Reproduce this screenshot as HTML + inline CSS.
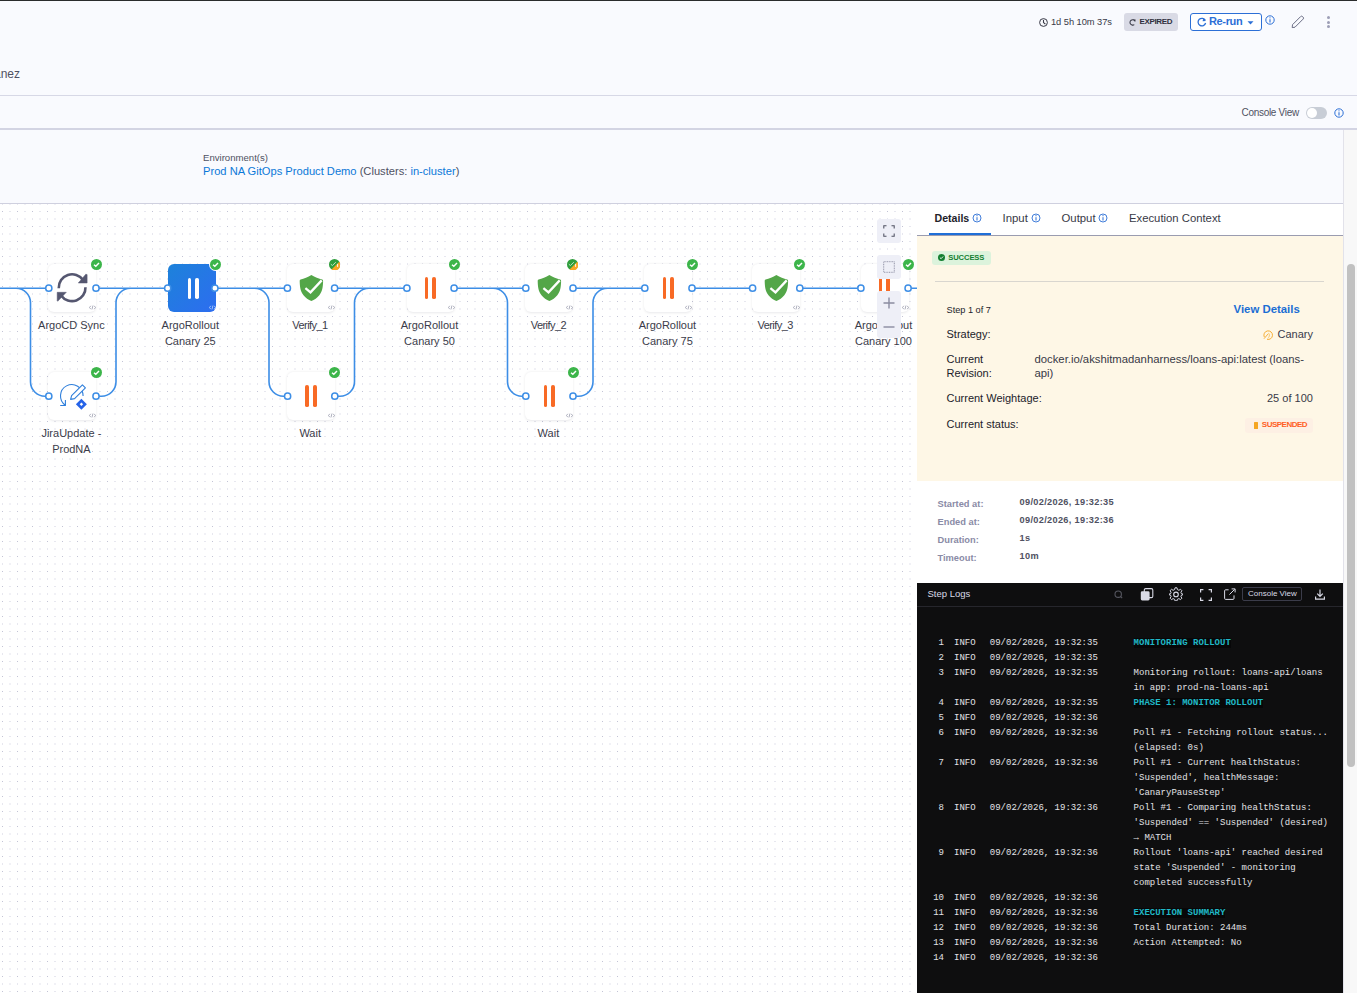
<!DOCTYPE html>
<html><head><meta charset="utf-8">
<style>
*{box-sizing:border-box;margin:0;padding:0}
html,body{width:1357px;height:993px;overflow:hidden}
body{position:relative;background:#f9fafe;font-family:"Liberation Sans",sans-serif;color:#22222a}
.a{position:absolute;white-space:nowrap}
#topline{left:0;top:0;width:1357px;height:1px;background:#2a2c2c}
#l95{left:0;top:95px;width:1357px;height:1px;background:#d7d8e6}
#l128{left:0;top:128px;width:1357px;height:2px;background:#d3d4e3}
#l203{left:0;top:203px;width:1343px;height:1px;background:#cfd0df}
#rborder{left:1343px;top:130px;width:1px;height:863px;background:#e2e2ea}
#track{left:1344px;top:130px;width:13px;height:863px;background:#f8f8f8}
#thumb{left:1347px;top:264px;width:8px;height:503px;background:#c1c1c1;border-radius:4px}
.lbl{width:120px;text-align:center;font-size:11px;line-height:14px;color:#3b3c4a}
.log{font-family:"Liberation Mono",monospace;font-size:9px;line-height:15px;color:#e2e2e6}
.hl{color:#20b8c6;background:#070708;font-weight:700}
#canvas{left:0;top:204px;width:917px;height:789px;background:#fff}
</style></head>
<body>
<div class="a" id="topline"></div>
<div class="a" id="l95"></div>
<div class="a" id="l128"></div>
<div class="a" id="canvas"><svg width="917" height="789" viewBox="0 204 917 789" style="display:block"><defs><pattern id="dp" patternUnits="userSpaceOnUse" x="0" y="0" width="15" height="15"><rect x="2" y="1" width="1" height="1" fill="#c2c3d5"/><rect x="9" y="1" width="2" height="1" fill="#e7e7ef"/><rect x="2" y="8" width="1" height="2" fill="#e7e7ef"/><rect x="9" y="8" width="2" height="2" fill="#f1f1f6"/></pattern></defs><rect x="0" y="204" width="917" height="789" fill="url(#dp)"/></svg></div>

<!-- canvas -->
<svg class="a" style="left:0;top:204px" width="917" height="789" viewBox="0 204 917 789">
<path d="M0.0 288.2 H48.8 M96.0 288.2 H167.7 M214.9 288.2 H287.4 M334.6 288.2 H406.9 M454.1 288.2 H525.8 M573.0 288.2 H644.8 M692.0 288.2 H752.6 M799.8 288.2 H860.9 M908.1 288.2 H917.0 M16 288.2 A14.5 14.5 0 0 1 30.5 302.7 V381.7 A14.5 14.5 0 0 0 45.0 396.2 H48.800000000000004 M96.0 396.2 H101.5 A14.5 14.5 0 0 0 116 381.7 V302.7 A14.5 14.5 0 0 1 130.5 288.2 M254.5 288.2 A14.5 14.5 0 0 1 269 302.7 V381.7 A14.5 14.5 0 0 0 283.5 396.2 H287.59999999999997 M334.8 396.2 H340.0 A14.5 14.5 0 0 0 354.5 381.7 V302.7 A14.5 14.5 0 0 1 369 288.2 M493 288.2 A14.5 14.5 0 0 1 507.5 302.7 V381.7 A14.5 14.5 0 0 0 522.0 396.2 H525.8 M573.0 396.2 H578.5 A14.5 14.5 0 0 0 593 381.7 V302.7 A14.5 14.5 0 0 1 607.5 288.2" fill="none" stroke="#3d8ee6" stroke-width="1.6"/>
</svg>
<div class="a" style="left:48.4px;top:264px;width:48px;height:48px;border-radius:6px;background:#fff;box-shadow:0 0.5px 2.5px rgba(40,41,61,0.10);">
<svg class="a" style="left:0;top:0" width="48" height="48" viewBox="0 0 48 48"><path d="M10.72 24.2A13.4 13.4 0 0 1 35.08 16" fill="none" stroke="#555770" stroke-width="2.6"/><path d="M37.8 10.2L39.1 10.6V19H30.3z" fill="#555770" stroke="#555770" stroke-width="0.5" stroke-linejoin="round"/><path d="M37.48 23.2A13.4 13.4 0 0 1 13.12 31.39" fill="none" stroke="#555770" stroke-width="2.6"/><path d="M9.2 28.3H18.3L9.7 37.3 9.2 36.8z" fill="#555770" stroke="#555770" stroke-width="0.5" stroke-linejoin="round"/></svg>
<svg class="a" style="left:41px;top:41px" width="7" height="5" viewBox="0 0 7 5"><path d="M1.8 0.8L0.5 2.5 1.8 4.2M5.2 0.8L6.5 2.5 5.2 4.2M3.9 0.6L3 4.4" fill="none" stroke="#8a8ca0" stroke-width="0.7"/></svg>
<svg class="a" style="left:42.3px;top:-4.6px" width="11" height="11" viewBox="0 0 11 11"><circle cx="5.5" cy="5.5" r="5.5" fill="#3cb54a"/><path d="M3 5.7L4.8 7.3 8 3.9" fill="none" stroke="#fff" stroke-width="1.4"/></svg>
</div>
<div class="a lbl" style="left:11.400000000000006px;top:318px;">ArgoCD Sync</div>
<div class="a" style="left:168.3px;top:264px;width:48px;height:48px;border-radius:6px;background:linear-gradient(135deg,#1d82da,#2d6df0);">
<div class="a" style="left:19.5px;top:14px;width:3.5px;height:21px;border-radius:1.75px;background:#fff"></div><div class="a" style="left:27.2px;top:14px;width:3.5px;height:21px;border-radius:1.75px;background:#fff"></div>
<svg class="a" style="left:41px;top:41px" width="7" height="5" viewBox="0 0 7 5"><path d="M1.8 0.8L0.5 2.5 1.8 4.2M5.2 0.8L6.5 2.5 5.2 4.2M3.9 0.6L3 4.4" fill="none" stroke="#d0e2ff" stroke-width="0.7"/></svg>
<svg class="a" style="left:40.5px;top:-5.8px" width="13" height="13" viewBox="0 0 13 13"><circle cx="6.5" cy="6.5" r="6.5" fill="#fff"/><circle cx="6.5" cy="6.5" r="5.5" fill="#3cb54a"/><path d="M4 6.7L5.8 8.3 9 4.9" fill="none" stroke="#fff" stroke-width="1.4"/></svg>
</div>
<div class="a lbl" style="left:130.3px;top:318px;">ArgoRollout</div>
<div class="a lbl" style="left:130.3px;top:334px;">Canary 25</div>
<div class="a" style="left:287.0px;top:264px;width:48px;height:48px;border-radius:6px;background:#fff;box-shadow:0 0.5px 2.5px rgba(40,41,61,0.10);">
<svg class="a" style="left:0;top:0" width="48" height="48" viewBox="0 0 48 48"><path d="M24.4 11C21 13 17 14.5 13.6 15.6Q12.6 16 12.7 17C12.8 23 13.5 27.5 16.5 31.2 18.5 33.8 21.5 36 24.4 36.9 27.3 36 30.3 33.8 32.3 31.2 35.3 27.5 36 23 36.1 17Q36.2 16 35.2 15.6C31.8 14.5 27.8 13 24.4 11z" fill="#53a648"/><path d="M18.4 24.2L23.5 28.4 34.7 16.4" fill="none" stroke="#fff" stroke-width="2.3"/></svg>
<svg class="a" style="left:41px;top:41px" width="7" height="5" viewBox="0 0 7 5"><path d="M1.8 0.8L0.5 2.5 1.8 4.2M5.2 0.8L6.5 2.5 5.2 4.2M3.9 0.6L3 4.4" fill="none" stroke="#8a8ca0" stroke-width="0.7"/></svg>
<svg class="a" style="left:42px;top:-5px" width="11" height="11" viewBox="0 0 11 11"><circle cx="5.5" cy="5.5" r="5.5" fill="#2f9e3c"/><path d="M10.3 2.8A5.5 5.5 0 0 1 2.5 10.4z" fill="#f8a623"/><path d="M1.8 5.2L3.4 6.5 6.8 3.2" fill="none" stroke="#bfe3c3" stroke-width="1"/><path d="M8.6 4.9V7.9" stroke="#fff" stroke-width="0.9"/></svg>
</div>
<div class="a lbl" style="left:250.0px;top:318px;letter-spacing:-0.55px;">Verify_1</div>
<div class="a" style="left:406.5px;top:264px;width:48px;height:48px;border-radius:6px;background:#fff;box-shadow:0 0.5px 2.5px rgba(40,41,61,0.10);">
<div class="a" style="left:18.3px;top:13px;width:3.7px;height:22px;border-radius:1.85px;background:#f86a25"></div><div class="a" style="left:25.8px;top:13px;width:3.7px;height:22px;border-radius:1.85px;background:#f86a25"></div>
<svg class="a" style="left:41px;top:41px" width="7" height="5" viewBox="0 0 7 5"><path d="M1.8 0.8L0.5 2.5 1.8 4.2M5.2 0.8L6.5 2.5 5.2 4.2M3.9 0.6L3 4.4" fill="none" stroke="#8a8ca0" stroke-width="0.7"/></svg>
<svg class="a" style="left:42.3px;top:-4.6px" width="11" height="11" viewBox="0 0 11 11"><circle cx="5.5" cy="5.5" r="5.5" fill="#3cb54a"/><path d="M3 5.7L4.8 7.3 8 3.9" fill="none" stroke="#fff" stroke-width="1.4"/></svg>
</div>
<div class="a lbl" style="left:369.5px;top:318px;">ArgoRollout</div>
<div class="a lbl" style="left:369.5px;top:334px;">Canary 50</div>
<div class="a" style="left:525.4px;top:264px;width:48px;height:48px;border-radius:6px;background:#fff;box-shadow:0 0.5px 2.5px rgba(40,41,61,0.10);">
<svg class="a" style="left:0;top:0" width="48" height="48" viewBox="0 0 48 48"><path d="M24.4 11C21 13 17 14.5 13.6 15.6Q12.6 16 12.7 17C12.8 23 13.5 27.5 16.5 31.2 18.5 33.8 21.5 36 24.4 36.9 27.3 36 30.3 33.8 32.3 31.2 35.3 27.5 36 23 36.1 17Q36.2 16 35.2 15.6C31.8 14.5 27.8 13 24.4 11z" fill="#53a648"/><path d="M18.4 24.2L23.5 28.4 34.7 16.4" fill="none" stroke="#fff" stroke-width="2.3"/></svg>
<svg class="a" style="left:41px;top:41px" width="7" height="5" viewBox="0 0 7 5"><path d="M1.8 0.8L0.5 2.5 1.8 4.2M5.2 0.8L6.5 2.5 5.2 4.2M3.9 0.6L3 4.4" fill="none" stroke="#8a8ca0" stroke-width="0.7"/></svg>
<svg class="a" style="left:42px;top:-5px" width="11" height="11" viewBox="0 0 11 11"><circle cx="5.5" cy="5.5" r="5.5" fill="#2f9e3c"/><path d="M10.3 2.8A5.5 5.5 0 0 1 2.5 10.4z" fill="#f8a623"/><path d="M1.8 5.2L3.4 6.5 6.8 3.2" fill="none" stroke="#bfe3c3" stroke-width="1"/><path d="M8.6 4.9V7.9" stroke="#fff" stroke-width="0.9"/></svg>
</div>
<div class="a lbl" style="left:488.4px;top:318px;letter-spacing:-0.55px;">Verify_2</div>
<div class="a" style="left:644.4px;top:264px;width:48px;height:48px;border-radius:6px;background:#fff;box-shadow:0 0.5px 2.5px rgba(40,41,61,0.10);">
<div class="a" style="left:18.3px;top:13px;width:3.7px;height:22px;border-radius:1.85px;background:#f86a25"></div><div class="a" style="left:25.8px;top:13px;width:3.7px;height:22px;border-radius:1.85px;background:#f86a25"></div>
<svg class="a" style="left:41px;top:41px" width="7" height="5" viewBox="0 0 7 5"><path d="M1.8 0.8L0.5 2.5 1.8 4.2M5.2 0.8L6.5 2.5 5.2 4.2M3.9 0.6L3 4.4" fill="none" stroke="#8a8ca0" stroke-width="0.7"/></svg>
<svg class="a" style="left:42.3px;top:-4.6px" width="11" height="11" viewBox="0 0 11 11"><circle cx="5.5" cy="5.5" r="5.5" fill="#3cb54a"/><path d="M3 5.7L4.8 7.3 8 3.9" fill="none" stroke="#fff" stroke-width="1.4"/></svg>
</div>
<div class="a lbl" style="left:607.4px;top:318px;">ArgoRollout</div>
<div class="a lbl" style="left:607.4px;top:334px;">Canary 75</div>
<div class="a" style="left:752.2px;top:264px;width:48px;height:48px;border-radius:6px;background:#fff;box-shadow:0 0.5px 2.5px rgba(40,41,61,0.10);">
<svg class="a" style="left:0;top:0" width="48" height="48" viewBox="0 0 48 48"><path d="M24.4 11C21 13 17 14.5 13.6 15.6Q12.6 16 12.7 17C12.8 23 13.5 27.5 16.5 31.2 18.5 33.8 21.5 36 24.4 36.9 27.3 36 30.3 33.8 32.3 31.2 35.3 27.5 36 23 36.1 17Q36.2 16 35.2 15.6C31.8 14.5 27.8 13 24.4 11z" fill="#53a648"/><path d="M18.4 24.2L23.5 28.4 34.7 16.4" fill="none" stroke="#fff" stroke-width="2.3"/></svg>
<svg class="a" style="left:41px;top:41px" width="7" height="5" viewBox="0 0 7 5"><path d="M1.8 0.8L0.5 2.5 1.8 4.2M5.2 0.8L6.5 2.5 5.2 4.2M3.9 0.6L3 4.4" fill="none" stroke="#8a8ca0" stroke-width="0.7"/></svg>
<svg class="a" style="left:42.3px;top:-4.6px" width="11" height="11" viewBox="0 0 11 11"><circle cx="5.5" cy="5.5" r="5.5" fill="#3cb54a"/><path d="M3 5.7L4.8 7.3 8 3.9" fill="none" stroke="#fff" stroke-width="1.4"/></svg>
</div>
<div class="a lbl" style="left:715.2px;top:318px;letter-spacing:-0.55px;">Verify_3</div>
<div class="a" style="left:860.5px;top:264px;width:48px;height:48px;border-radius:6px;background:#fff;box-shadow:0 0.5px 2.5px rgba(40,41,61,0.10);">
<div class="a" style="left:18.3px;top:13px;width:3.7px;height:22px;border-radius:1.85px;background:#f86a25"></div><div class="a" style="left:25.8px;top:13px;width:3.7px;height:22px;border-radius:1.85px;background:#f86a25"></div>
<svg class="a" style="left:41px;top:41px" width="7" height="5" viewBox="0 0 7 5"><path d="M1.8 0.8L0.5 2.5 1.8 4.2M5.2 0.8L6.5 2.5 5.2 4.2M3.9 0.6L3 4.4" fill="none" stroke="#8a8ca0" stroke-width="0.7"/></svg>
<svg class="a" style="left:42.3px;top:-4.6px" width="11" height="11" viewBox="0 0 11 11"><circle cx="5.5" cy="5.5" r="5.5" fill="#3cb54a"/><path d="M3 5.7L4.8 7.3 8 3.9" fill="none" stroke="#fff" stroke-width="1.4"/></svg>
</div>
<div class="a lbl" style="left:823.5px;top:318px;">ArgoRollout</div>
<div class="a lbl" style="left:823.5px;top:334px;">Canary 100</div>
<div class="a" style="left:48.4px;top:372px;width:48px;height:48px;border-radius:6px;background:#fff;box-shadow:0 0.5px 2.5px rgba(40,41,61,0.10);">
<svg class="a" style="left:0;top:0" width="48" height="48" viewBox="0 0 48 48"><path d="M35.1 23.9A11.3 11.3 0 1 0 17.4 33.2" fill="none" stroke="#2f7fdb" stroke-width="1.1"/><path d="M12.2 33.5L17.4 33.5 17.4 28" fill="none" stroke="#2f7fdb" stroke-width="1.1" stroke-linejoin="round"/><path d="M22.6 27.4L23.6 23.6 34.4 12.8 37.4 15.8 26.6 26.6z" fill="#fff" stroke="#2f7fdb" stroke-width="1.1" stroke-linejoin="round"/><path d="M33.4 26.8L38.9 32.3 33.4 37.8 27.9 32.3z" fill="#2563e8"/><path d="M33.4 30.6L35.1 32.3 33.4 34 31.7 32.3z" fill="#fff"/></svg>
<svg class="a" style="left:41px;top:41px" width="7" height="5" viewBox="0 0 7 5"><path d="M1.8 0.8L0.5 2.5 1.8 4.2M5.2 0.8L6.5 2.5 5.2 4.2M3.9 0.6L3 4.4" fill="none" stroke="#8a8ca0" stroke-width="0.7"/></svg>
<svg class="a" style="left:42.3px;top:-4.6px" width="11" height="11" viewBox="0 0 11 11"><circle cx="5.5" cy="5.5" r="5.5" fill="#3cb54a"/><path d="M3 5.7L4.8 7.3 8 3.9" fill="none" stroke="#fff" stroke-width="1.4"/></svg>
</div>
<div class="a lbl" style="left:11.400000000000006px;top:426px;">JiraUpdate -</div>
<div class="a lbl" style="left:11.400000000000006px;top:442px;">ProdNA</div>
<div class="a" style="left:287.2px;top:372px;width:48px;height:48px;border-radius:6px;background:#fff;box-shadow:0 0.5px 2.5px rgba(40,41,61,0.10);">
<div class="a" style="left:18.3px;top:13px;width:3.7px;height:22px;border-radius:1.85px;background:#f86a25"></div><div class="a" style="left:25.8px;top:13px;width:3.7px;height:22px;border-radius:1.85px;background:#f86a25"></div>
<svg class="a" style="left:41px;top:41px" width="7" height="5" viewBox="0 0 7 5"><path d="M1.8 0.8L0.5 2.5 1.8 4.2M5.2 0.8L6.5 2.5 5.2 4.2M3.9 0.6L3 4.4" fill="none" stroke="#8a8ca0" stroke-width="0.7"/></svg>
<svg class="a" style="left:42.3px;top:-4.6px" width="11" height="11" viewBox="0 0 11 11"><circle cx="5.5" cy="5.5" r="5.5" fill="#3cb54a"/><path d="M3 5.7L4.8 7.3 8 3.9" fill="none" stroke="#fff" stroke-width="1.4"/></svg>
</div>
<div class="a lbl" style="left:250.2px;top:426px;">Wait</div>
<div class="a" style="left:525.4px;top:372px;width:48px;height:48px;border-radius:6px;background:#fff;box-shadow:0 0.5px 2.5px rgba(40,41,61,0.10);">
<div class="a" style="left:18.3px;top:13px;width:3.7px;height:22px;border-radius:1.85px;background:#f86a25"></div><div class="a" style="left:25.8px;top:13px;width:3.7px;height:22px;border-radius:1.85px;background:#f86a25"></div>
<svg class="a" style="left:41px;top:41px" width="7" height="5" viewBox="0 0 7 5"><path d="M1.8 0.8L0.5 2.5 1.8 4.2M5.2 0.8L6.5 2.5 5.2 4.2M3.9 0.6L3 4.4" fill="none" stroke="#8a8ca0" stroke-width="0.7"/></svg>
<svg class="a" style="left:42.3px;top:-4.6px" width="11" height="11" viewBox="0 0 11 11"><circle cx="5.5" cy="5.5" r="5.5" fill="#3cb54a"/><path d="M3 5.7L4.8 7.3 8 3.9" fill="none" stroke="#fff" stroke-width="1.4"/></svg>
</div>
<div class="a lbl" style="left:488.4px;top:426px;">Wait</div>
<svg class="a" style="left:0;top:204px" width="917" height="789" viewBox="0 204 917 789">
<circle cx="48.8" cy="288.2" r="3.1" fill="#fff" stroke="#3d8ee6" stroke-width="1.5"/>
<circle cx="96.0" cy="288.2" r="3.1" fill="#fff" stroke="#3d8ee6" stroke-width="1.5"/>
<circle cx="167.7" cy="288.2" r="3.1" fill="#fff" stroke="#3d8ee6" stroke-width="1.5"/>
<circle cx="214.9" cy="288.2" r="3.1" fill="#fff" stroke="#3d8ee6" stroke-width="1.5"/>
<circle cx="287.4" cy="288.2" r="3.1" fill="#fff" stroke="#3d8ee6" stroke-width="1.5"/>
<circle cx="334.6" cy="288.2" r="3.1" fill="#fff" stroke="#3d8ee6" stroke-width="1.5"/>
<circle cx="406.9" cy="288.2" r="3.1" fill="#fff" stroke="#3d8ee6" stroke-width="1.5"/>
<circle cx="454.1" cy="288.2" r="3.1" fill="#fff" stroke="#3d8ee6" stroke-width="1.5"/>
<circle cx="525.8" cy="288.2" r="3.1" fill="#fff" stroke="#3d8ee6" stroke-width="1.5"/>
<circle cx="573.0" cy="288.2" r="3.1" fill="#fff" stroke="#3d8ee6" stroke-width="1.5"/>
<circle cx="644.8" cy="288.2" r="3.1" fill="#fff" stroke="#3d8ee6" stroke-width="1.5"/>
<circle cx="692.0" cy="288.2" r="3.1" fill="#fff" stroke="#3d8ee6" stroke-width="1.5"/>
<circle cx="752.6" cy="288.2" r="3.1" fill="#fff" stroke="#3d8ee6" stroke-width="1.5"/>
<circle cx="799.8" cy="288.2" r="3.1" fill="#fff" stroke="#3d8ee6" stroke-width="1.5"/>
<circle cx="860.9" cy="288.2" r="3.1" fill="#fff" stroke="#3d8ee6" stroke-width="1.5"/>
<circle cx="908.1" cy="288.2" r="3.1" fill="#fff" stroke="#3d8ee6" stroke-width="1.5"/>
<circle cx="48.8" cy="396.2" r="3.1" fill="#fff" stroke="#3d8ee6" stroke-width="1.5"/>
<circle cx="96.0" cy="396.2" r="3.1" fill="#fff" stroke="#3d8ee6" stroke-width="1.5"/>
<circle cx="287.6" cy="396.2" r="3.1" fill="#fff" stroke="#3d8ee6" stroke-width="1.5"/>
<circle cx="334.8" cy="396.2" r="3.1" fill="#fff" stroke="#3d8ee6" stroke-width="1.5"/>
<circle cx="525.8" cy="396.2" r="3.1" fill="#fff" stroke="#3d8ee6" stroke-width="1.5"/>
<circle cx="573.0" cy="396.2" r="3.1" fill="#fff" stroke="#3d8ee6" stroke-width="1.5"/>
</svg>
<div class="a" style="left:877px;top:219px;width:24px;height:24px;border-radius:3px;background:#eeeff7"></div>
<svg class="a" style="left:883px;top:225px" width="12" height="12" viewBox="0 0 12 12"><path d="M0.8 3.5V0.8H3.5M8.5 0.8H11.2V3.5M11.2 8.5V11.2H8.5M3.5 11.2H0.8V8.5" fill="none" stroke="#4f5162" stroke-width="1.05"/></svg>
<div class="a" style="left:877px;top:255px;width:24px;height:24px;border-radius:3px;background:#eeeff7"></div>
<svg class="a" style="left:883px;top:261px" width="12" height="12" viewBox="0 0 12 12"><path d="M0.7 0.7H11.3V11.3H0.7z" fill="none" stroke="#7d7f95" stroke-width="0.8" stroke-dasharray="1 0.7"/></svg>
<div class="a" style="left:877px;top:291px;width:24px;height:47px;border-radius:3px;background:#eeeff7"></div>
<svg class="a" style="left:883px;top:297px" width="12" height="12" viewBox="0 0 12 12"><path d="M6 0.5V11.5M0.5 6H11.5" fill="none" stroke="#8a8ca0" stroke-width="1.4"/></svg>
<svg class="a" style="left:883px;top:321px" width="12" height="12" viewBox="0 0 12 12"><path d="M0.5 6H11.5" fill="none" stroke="#8a8ca0" stroke-width="1.4"/></svg>

<!-- /canvas -->
<div class="a" id="l203"></div>

<!-- panel -->
<div class="a" style="left:917px;top:204px;width:426px;height:31px;background:#fff"></div>
<div class="a" style="left:917px;top:235px;width:426px;height:1px;background:#9a9cb0"></div>
<div class="a" style="left:929px;top:233px;width:62px;height:2px;background:#1f6fd8"></div>
<div class="a" style="left:934.5px;top:212.2px;font-size:10.6px;font-weight:700;color:#22222a;line-height:12px">Details</div>
<svg class="a" style="left:972.4px;top:212.6px" width="10" height="10" viewBox="0 0 10 10"><circle cx="5" cy="5" r="4" fill="none" stroke="#2c6fd6" stroke-width="0.9"/><path d="M5 4.2V7.5" stroke="#2c6fd6" stroke-width="1"/><circle cx="5" cy="2.7" r="0.6" fill="#2c6fd6"/></svg>
<div class="a" style="left:1002.5px;top:212px;font-size:11.4px;color:#383946;line-height:12px">Input</div>
<svg class="a" style="left:1030.8px;top:212.6px" width="10" height="10" viewBox="0 0 10 10"><circle cx="5" cy="5" r="4" fill="none" stroke="#2c6fd6" stroke-width="0.9"/><path d="M5 4.2V7.5" stroke="#2c6fd6" stroke-width="1"/><circle cx="5" cy="2.7" r="0.6" fill="#2c6fd6"/></svg>
<div class="a" style="left:1061.5px;top:212px;font-size:11.35px;color:#383946;line-height:12px">Output</div>
<svg class="a" style="left:1098.3px;top:212.6px" width="10" height="10" viewBox="0 0 10 10"><circle cx="5" cy="5" r="4" fill="none" stroke="#2c6fd6" stroke-width="0.9"/><path d="M5 4.2V7.5" stroke="#2c6fd6" stroke-width="1"/><circle cx="5" cy="2.7" r="0.6" fill="#2c6fd6"/></svg>
<div class="a" style="left:1129px;top:212px;font-size:11.3px;color:#383946;line-height:12px">Execution Context</div>
<div class="a" style="left:917px;top:236px;width:426px;height:245px;background:#fef7e6"></div>
<div class="a" style="left:932px;top:251px;width:59px;height:14px;border-radius:3px;background:#dcf3dc"></div>
<svg class="a" style="left:938px;top:253.8px" width="7" height="7" viewBox="0 0 7 7"><circle cx="3.5" cy="3.5" r="3.5" fill="#137f30"/><path d="M1.9 3.6L3.1 4.7 5.1 2.5" fill="none" stroke="#fff" stroke-width="0.9"/></svg>
<div class="a" style="left:948.2px;top:252.8px;font-size:7.6px;letter-spacing:-0.08px;font-weight:700;color:#137f30;line-height:9px">SUCCESS</div>
<div class="a" style="left:935px;top:281px;width:389px;height:1px;background:#d9d6cf"></div>
<div class="a" style="left:946.5px;top:305px;font-size:9.2px;color:#22222a;line-height:11px">Step 1 of 7</div>
<div class="a" style="left:1233.5px;top:302.5px;font-size:11.4px;font-weight:700;color:#1b6ed4;line-height:13px">View Details</div>
<div class="a" style="left:946.5px;top:328px;font-size:11px;color:#22222a;line-height:13px">Strategy:</div>
<svg class="a" style="left:1263px;top:330px" width="10" height="10" viewBox="0 0 10 10"><path d="M1.3 7A4.3 4.3 0 1 1 4 9.3" fill="none" stroke="#f5a623" stroke-width="0.9"/><path d="M1 8.7L5.4 3.6" fill="none" stroke="#f5a623" stroke-width="0.9"/><path d="M3.8 9.1C5.8 7.6 6.6 5 5.5 2.4 7.5 4.4 7.3 7.6 3.8 9.1z" fill="#f7c25e"/></svg>
<div class="a" style="left:1277.5px;top:328px;font-size:11px;color:#3a3b4a;line-height:13px">Canary</div>
<div class="a" style="left:946.5px;top:352px;font-size:11px;color:#22222a;line-height:14px">Current<br>Revision:</div>
<div class="a" style="left:1034.5px;top:352px;font-size:11.3px;color:#383946;line-height:14px">docker.io/akshitmadanharness/loans-api:latest (loans-<br>api)</div>
<div class="a" style="left:946.5px;top:392px;font-size:11px;color:#22222a;line-height:13px">Current Weightage:</div>
<div class="a" style="left:1267px;top:392px;font-size:11px;color:#383946;line-height:13px">25 of 100</div>
<div class="a" style="left:946.5px;top:418px;font-size:11px;color:#22222a;line-height:13px">Current status:</div>
<div class="a" style="left:1245px;top:418px;width:68px;height:15px;border-radius:3px;background:#fdf0e4"></div>
<div class="a" style="left:1254px;top:421.5px;width:4px;height:7px;background:#f5a623;border-radius:0.5px"></div>
<div class="a" style="left:1261.8px;top:419.7px;font-size:8px;letter-spacing:-0.5px;font-weight:700;color:#ff5f24;line-height:9px">SUSPENDED</div>
<div class="a" style="left:917px;top:481px;width:426px;height:102px;background:#fff"></div>
<div class="a" style="left:937.5px;top:498px;font-size:9.3px;font-weight:700;color:#8a8ba6;line-height:12px">Started at:</div>
<div class="a" style="left:1019.5px;top:496px;font-size:9.2px;letter-spacing:0.33px;font-weight:700;color:#4f5162;line-height:12px">09/02/2026, 19:32:35</div>
<div class="a" style="left:937.5px;top:516px;font-size:9.3px;font-weight:700;color:#8a8ba6;line-height:12px">Ended at:</div>
<div class="a" style="left:1019.5px;top:514px;font-size:9.2px;letter-spacing:0.33px;font-weight:700;color:#4f5162;line-height:12px">09/02/2026, 19:32:36</div>
<div class="a" style="left:937.5px;top:534px;font-size:9.3px;font-weight:700;color:#8a8ba6;line-height:12px">Duration:</div>
<div class="a" style="left:1019.5px;top:532px;font-size:9.2px;letter-spacing:0.33px;font-weight:700;color:#4f5162;line-height:12px">1s</div>
<div class="a" style="left:937.5px;top:552px;font-size:9.3px;font-weight:700;color:#8a8ba6;line-height:12px">Timeout:</div>
<div class="a" style="left:1019.5px;top:550px;font-size:9.2px;letter-spacing:0.33px;font-weight:700;color:#4f5162;line-height:12px">10m</div>
<div class="a" style="left:917px;top:583px;width:426px;height:410px;background:#0e0e0f"></div>
<div class="a" style="left:917px;top:606px;width:426px;height:1px;background:#26262c"></div>
<div class="a" style="left:927.5px;top:588px;font-size:9.5px;color:#d9dae6;line-height:12px">Step Logs</div>
<svg class="a" style="left:1113.5px;top:589.5px" width="9" height="9" viewBox="0 0 9 9"><circle cx="4.2" cy="4.2" r="3.2" fill="none" stroke="#55565f" stroke-width="1.1"/><path d="M6.5 6.5L8.2 8.2" stroke="#55565f" stroke-width="1.1"/></svg>
<svg class="a" style="left:1140px;top:587.5px" width="14" height="13" viewBox="0 0 14 13"><rect x="4.3" y="0.6" width="8.5" height="9" rx="1.4" fill="none" stroke="#d9dae6" stroke-width="1.1"/><rect x="0.8" y="3.3" width="8.8" height="9.2" rx="1.4" fill="#d9dae6"/></svg>
<svg class="a" style="left:1169px;top:587px" width="14" height="14" viewBox="0 0 14 14"><path d="M6 0.8H8L8.4 2.6 9.9 3.3 11.5 2.3 12.9 3.7 11.9 5.3 12.5 6.8 14 7.1V7.7L12.5 8.1 11.9 9.6 12.9 11.2 11.5 12.6 9.9 11.6 8.4 12.3 8 13.9H6L5.6 12.3 4.1 11.6 2.5 12.6 1.1 11.2 2.1 9.6 1.5 8.1 0 7.7V7.1L1.5 6.8 2.1 5.3 1.1 3.7 2.5 2.3 4.1 3.3 5.6 2.6z" fill="none" stroke="#d9dae6" stroke-width="1" stroke-linejoin="round"/><circle cx="7" cy="7.4" r="2.3" fill="none" stroke="#d9dae6" stroke-width="1.1"/></svg>
<svg class="a" style="left:1200px;top:588.5px" width="12" height="12" viewBox="0 0 12 12"><path d="M0.6 3.4V0.6H3.4M8.6 0.6H11.4V3.4M11.4 8.6V11.4H8.6M3.4 11.4H0.6V8.6" fill="none" stroke="#d9dae6" stroke-width="1.2"/></svg>
<svg class="a" style="left:1224px;top:588px" width="12" height="12" viewBox="0 0 12 12"><path d="M4.6 1.8H1.6Q0.6 1.8 0.6 2.8V10.4Q0.6 11.4 1.6 11.4H9Q10 11.4 10 10.4V7.4" fill="none" stroke="#d9dae6" stroke-width="1"/><path d="M5.4 6.6L10.6 1.4M7.6 0.9H11.1V4.4" fill="none" stroke="#d9dae6" stroke-width="1"/></svg>
<div class="a" style="left:1242px;top:587px;width:60px;height:14px;border:1px solid #3b3c4a;border-radius:2px"></div>
<div class="a" style="left:1248px;top:589px;font-size:8px;color:#d9dae6;line-height:10px">Console View</div>
<svg class="a" style="left:1315px;top:588.5px" width="10" height="11" viewBox="0 0 10 11"><path d="M5 0.5V7.2M2.2 4.6L5 7.4 7.8 4.6M0.6 7.6V10.2H9.4V7.6" fill="none" stroke="#d9dae6" stroke-width="1.2"/></svg>
<div class="a log" style="left:923px;top:636px;width:21px;text-align:right">1</div>
<div class="a log" style="left:954px;top:636px">INFO</div>
<div class="a log" style="left:989.8px;top:636px">09/02/2026, 19:32:35</div>
<div class="a log" style="left:1133.6px;top:636px"><b class="hl">MONITORING ROLLOUT</b></div>
<div class="a log" style="left:923px;top:651px;width:21px;text-align:right">2</div>
<div class="a log" style="left:954px;top:651px">INFO</div>
<div class="a log" style="left:989.8px;top:651px">09/02/2026, 19:32:35</div>
<div class="a log" style="left:1133.6px;top:651px"></div>
<div class="a log" style="left:923px;top:666px;width:21px;text-align:right">3</div>
<div class="a log" style="left:954px;top:666px">INFO</div>
<div class="a log" style="left:989.8px;top:666px">09/02/2026, 19:32:35</div>
<div class="a log" style="left:1133.6px;top:666px">Monitoring rollout: loans-api/loans<br>in app: prod-na-loans-api</div>
<div class="a log" style="left:923px;top:696px;width:21px;text-align:right">4</div>
<div class="a log" style="left:954px;top:696px">INFO</div>
<div class="a log" style="left:989.8px;top:696px">09/02/2026, 19:32:35</div>
<div class="a log" style="left:1133.6px;top:696px"><b class="hl">PHASE 1: MONITOR ROLLOUT</b></div>
<div class="a log" style="left:923px;top:711px;width:21px;text-align:right">5</div>
<div class="a log" style="left:954px;top:711px">INFO</div>
<div class="a log" style="left:989.8px;top:711px">09/02/2026, 19:32:36</div>
<div class="a log" style="left:1133.6px;top:711px"></div>
<div class="a log" style="left:923px;top:726px;width:21px;text-align:right">6</div>
<div class="a log" style="left:954px;top:726px">INFO</div>
<div class="a log" style="left:989.8px;top:726px">09/02/2026, 19:32:36</div>
<div class="a log" style="left:1133.6px;top:726px">Poll #1 - Fetching rollout status...<br>(elapsed: 0s)</div>
<div class="a log" style="left:923px;top:756px;width:21px;text-align:right">7</div>
<div class="a log" style="left:954px;top:756px">INFO</div>
<div class="a log" style="left:989.8px;top:756px">09/02/2026, 19:32:36</div>
<div class="a log" style="left:1133.6px;top:756px">Poll #1 - Current healthStatus:<br>'Suspended', healthMessage:<br>'CanaryPauseStep'</div>
<div class="a log" style="left:923px;top:801px;width:21px;text-align:right">8</div>
<div class="a log" style="left:954px;top:801px">INFO</div>
<div class="a log" style="left:989.8px;top:801px">09/02/2026, 19:32:36</div>
<div class="a log" style="left:1133.6px;top:801px">Poll #1 - Comparing healthStatus:<br>'Suspended' == 'Suspended' (desired)<br>&#8594; MATCH</div>
<div class="a log" style="left:923px;top:846px;width:21px;text-align:right">9</div>
<div class="a log" style="left:954px;top:846px">INFO</div>
<div class="a log" style="left:989.8px;top:846px">09/02/2026, 19:32:36</div>
<div class="a log" style="left:1133.6px;top:846px">Rollout 'loans-api' reached desired<br>state 'Suspended' - monitoring<br>completed successfully</div>
<div class="a log" style="left:923px;top:891px;width:21px;text-align:right">10</div>
<div class="a log" style="left:954px;top:891px">INFO</div>
<div class="a log" style="left:989.8px;top:891px">09/02/2026, 19:32:36</div>
<div class="a log" style="left:1133.6px;top:891px"></div>
<div class="a log" style="left:923px;top:906px;width:21px;text-align:right">11</div>
<div class="a log" style="left:954px;top:906px">INFO</div>
<div class="a log" style="left:989.8px;top:906px">09/02/2026, 19:32:36</div>
<div class="a log" style="left:1133.6px;top:906px"><b class="hl">EXECUTION SUMMARY</b></div>
<div class="a log" style="left:923px;top:921px;width:21px;text-align:right">12</div>
<div class="a log" style="left:954px;top:921px">INFO</div>
<div class="a log" style="left:989.8px;top:921px">09/02/2026, 19:32:36</div>
<div class="a log" style="left:1133.6px;top:921px">Total Duration: 244ms</div>
<div class="a log" style="left:923px;top:936px;width:21px;text-align:right">13</div>
<div class="a log" style="left:954px;top:936px">INFO</div>
<div class="a log" style="left:989.8px;top:936px">09/02/2026, 19:32:36</div>
<div class="a log" style="left:1133.6px;top:936px">Action Attempted: No</div>
<div class="a log" style="left:923px;top:951px;width:21px;text-align:right">14</div>
<div class="a log" style="left:954px;top:951px">INFO</div>
<div class="a log" style="left:989.8px;top:951px">09/02/2026, 19:32:36</div>
<div class="a log" style="left:1133.6px;top:951px"></div>
<!-- /panel -->
<div class="a" id="rborder"></div>
<div class="a" id="track"></div>
<div class="a" id="thumb"></div>

<!-- header -->
<div class="a" style="left:-6px;top:65.5px;font-size:12px;letter-spacing:0px;color:#4f5162;line-height:16px">anez</div>
<svg class="a" style="left:1039px;top:18px" width="9" height="9" viewBox="0 0 9 9"><circle cx="4.5" cy="4.5" r="3.9" fill="none" stroke="#383946" stroke-width="1"/><path d="M4.5 2.3V4.6L6 5.8" fill="none" stroke="#383946" stroke-width="1.1" stroke-linecap="round"/></svg>
<div class="a" style="left:1051px;top:16px;font-size:9.3px;letter-spacing:-0.05px;color:#383946;line-height:12px">1d 5h 10m 37s</div>
<div class="a" style="left:1124px;top:13px;width:54px;height:18px;background:#d9dae5;border-radius:3px"></div>
<svg class="a" style="left:1129px;top:18px" width="8" height="8" viewBox="0 0 8 8"><path d="M5.9 2.9A2.7 2.7 0 1 0 5.3 6.6" fill="none" stroke="#383946" stroke-width="1.05"/><path d="M3.9 1.6L6.6 1.4 6.2 4.1z" fill="#383946"/></svg>
<div class="a" style="left:1139.6px;top:16.8px;font-size:8px;font-weight:700;color:#2f3040;line-height:9px;letter-spacing:-0.38px">EXPIRED</div>
<div class="a" style="left:1190px;top:13px;width:72px;height:18px;border:1px solid #2c6fd6;border-radius:3px;background:#fff"></div>
<svg class="a" style="left:1197px;top:17px" width="10" height="10" viewBox="0 0 10 10"><path d="M8.3 3.4A3.8 3.8 0 1 0 8.6 6" fill="none" stroke="#2c6fd6" stroke-width="1.3"/><path d="M6.3 1.2L8.9 3.9 5.6 4.3z" fill="#2c6fd6"/></svg>
<div class="a" style="left:1209px;top:15px;font-size:11px;font-weight:700;letter-spacing:-0.35px;color:#2c6fd6;line-height:13px">Re-run</div>
<svg class="a" style="left:1247px;top:21px" width="7" height="4" viewBox="0 0 7 4"><path d="M0.5 0.3H6.5L3.5 3.6z" fill="#2c6fd6"/></svg>
<svg class="a" style="left:1265px;top:15px" width="10" height="10" viewBox="0 0 10 10"><circle cx="5" cy="5" r="4.2" fill="none" stroke="#2c6fd6" stroke-width="1"/><path d="M5 4.3V7.4" stroke="#2c6fd6" stroke-width="1.1"/><circle cx="5" cy="2.8" r="0.6" fill="#2c6fd6"/></svg>
<svg class="a" style="left:1291px;top:15px" width="14" height="14" viewBox="0 0 14 14"><path d="M1.2 12.6L1.5 9.7 9.6 1.6Q10.6 0.6 11.6 1.6L12.1 2.1Q13.1 3.1 12.1 4.1L4 12.2z" fill="none" stroke="#6b6d85" stroke-width="1" stroke-linejoin="round"/></svg>
<div class="a" style="left:1326.5px;top:16px;width:3px;height:3px;border-radius:50%;background:#9d9eb6"></div>
<div class="a" style="left:1326.5px;top:20.5px;width:3px;height:3px;border-radius:50%;background:#9d9eb6"></div>
<div class="a" style="left:1326.5px;top:25px;width:3px;height:3px;border-radius:50%;background:#9d9eb6"></div>
<!-- console view toggle -->
<div class="a" style="left:1241.5px;top:106.5px;font-size:10px;letter-spacing:-0.3px;color:#4f5162;line-height:12px">Console View</div>
<div class="a" style="left:1306px;top:107px;width:21px;height:12px;border-radius:6px;background:#c8cdd6"></div>
<div class="a" style="left:1307px;top:108px;width:10px;height:10px;border-radius:50%;background:#fff"></div>
<svg class="a" style="left:1334px;top:107.5px" width="10" height="10" viewBox="0 0 10 10"><circle cx="5" cy="5" r="4.2" fill="none" stroke="#2c6fd6" stroke-width="1"/><path d="M5 4.3V7.4" stroke="#2c6fd6" stroke-width="1.1"/><circle cx="5" cy="2.8" r="0.6" fill="#2c6fd6"/></svg>
<!-- env -->
<div class="a" style="left:203px;top:152px;font-size:9.6px;color:#4f5162;line-height:11px">Environment(s)</div>
<div class="a" style="left:203px;top:165px;font-size:11.15px;color:#4f5162;line-height:13px"><span style="color:#0b78d8">Prod NA GitOps Product Demo</span> (Clusters: <span style="color:#0b78d8">in-cluster</span>)</div>
</body></html>
